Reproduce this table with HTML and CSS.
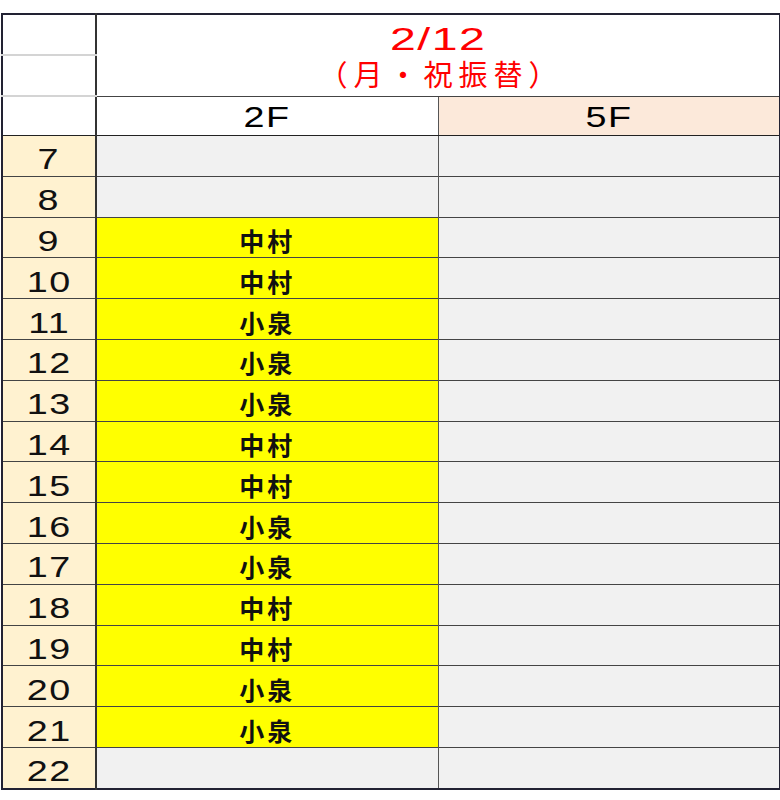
FILE: index.html
```html
<!DOCTYPE html>
<html lang="ja">
  <head>
    <meta charset="UTF-8" />
    <title>2/12 シフト表</title>
    <link rel="stylesheet" href="styles.css">
  </head>
  <body>
    <table class="sheet">
      <colgroup>
        <col class="col-hour" />
        <col class="col-floor" />
        <col class="col-floor" />
      </colgroup>
      <tr class="head-row">
        <td class="hour blank sub"></td>
        <td class="title" colspan="2" rowspan="2">
          <div class="date"><span class="wide">2/12</span></div>
          <div class="day"><span class="wide">（月・祝振替）</span></div>
        </td>
      </tr>
      <tr class="head-row">
        <td class="hour blank sub"></td>
      </tr>
      <tr class="floor-row">
        <td class="hour blank"></td>
        <td class="floor"><span class="wide">2F</span></td>
        <td class="floor pink"><span class="wide">5F</span></td>
      </tr>
      <tr><td class="hour"><span class="wide">7</span></td><td class="cell"></td><td class="cell"></td></tr>
      <tr><td class="hour"><span class="wide">8</span></td><td class="cell"></td><td class="cell"></td></tr>
      <tr><td class="hour"><span class="wide">9</span></td><td class="cell on">中村</td><td class="cell"></td></tr>
      <tr><td class="hour"><span class="wide">10</span></td><td class="cell on">中村</td><td class="cell"></td></tr>
      <tr><td class="hour"><span class="wide">11</span></td><td class="cell on">小泉</td><td class="cell"></td></tr>
      <tr><td class="hour"><span class="wide">12</span></td><td class="cell on">小泉</td><td class="cell"></td></tr>
      <tr><td class="hour"><span class="wide">13</span></td><td class="cell on">小泉</td><td class="cell"></td></tr>
      <tr><td class="hour"><span class="wide">14</span></td><td class="cell on">中村</td><td class="cell"></td></tr>
      <tr><td class="hour"><span class="wide">15</span></td><td class="cell on">中村</td><td class="cell"></td></tr>
      <tr><td class="hour"><span class="wide">16</span></td><td class="cell on">小泉</td><td class="cell"></td></tr>
      <tr><td class="hour"><span class="wide">17</span></td><td class="cell on">小泉</td><td class="cell"></td></tr>
      <tr><td class="hour"><span class="wide">18</span></td><td class="cell on">中村</td><td class="cell"></td></tr>
      <tr><td class="hour"><span class="wide">19</span></td><td class="cell on">中村</td><td class="cell"></td></tr>
      <tr><td class="hour"><span class="wide">20</span></td><td class="cell on">小泉</td><td class="cell"></td></tr>
      <tr><td class="hour"><span class="wide">21</span></td><td class="cell on">小泉</td><td class="cell"></td></tr>
      <tr><td class="hour"><span class="wide">22</span></td><td class="cell"></td><td class="cell"></td></tr>
    </table>
  </body>
</html>
```
FILE: styles.css
```css
body {
  margin: 13px 0 0 1px;
  background-color: #ffffff;
  font-family: "Liberation Sans", "Noto Sans CJK JP", sans-serif;
}
.sheet {
  border-collapse: collapse;
  table-layout: fixed;
  width: 778px;
  border: 2px solid #222233;
}
.col-hour {
  width: 94px;
}
.col-floor {
  width: 342px;
}
.wide {
  display: inline-block;
  transform: scaleX(1.3);
}
.sheet td {
  padding: 4px 0 0;
  height: 35.8px;
  border-top: 1px solid #444444;
  border-left: 1px solid #555555;
  text-align: center;
  vertical-align: middle;
  line-height: 1;
}
.sheet td.hour {
  padding-top: 8px;
  height: 31.8px;
  background-color: #fff2d0;
  font-size: 29px;
  letter-spacing: 1px;
  color: #111111;
  border-right: 2px solid #333333;
  border-left: 2px solid #222233;
}
.sheet td.blank {
  background-color: #ffffff;
}
.sheet .head-row td.sub {
  padding: 0;
  height: 39px;
  border-bottom: 2px solid #d4d4d4;
}
.sheet td.title {
  padding: 0;
  color: #ff0000;
  background-color: #ffffff;
}
.date {
  font-size: 32px;
  line-height: 34px;
  margin-top: 2px;
}
.date .wide {
  transform: scaleX(1.45);
  letter-spacing: 1px;
}
.day {
  font-family: "Noto Sans CJK JP", sans-serif;
  font-size: 29px;
  line-height: 34px;
}
.day .wide {
  transform: none;
  letter-spacing: 6px;
  padding-left: 6px;
}
.floor {
  font-size: 29px;
  letter-spacing: 1px;
  background-color: #ffffff;
}
.sheet .floor-row td {
  padding: 3px 0 0;
  height: 35px;
  border-bottom: 1px solid #222222;
}
.floor.pink {
  background-color: #fce9da;
}
.cell {
  background-color: #f1f1f1;
}
.sheet td.cell.on {
  padding-top: 6px;
  height: 33.8px;
  background-color: #ffff00;
  font-family: "Noto Sans CJK JP", sans-serif;
  font-weight: bold;
  font-size: 25px;
  letter-spacing: 3px;
  color: #111111;
}
```
